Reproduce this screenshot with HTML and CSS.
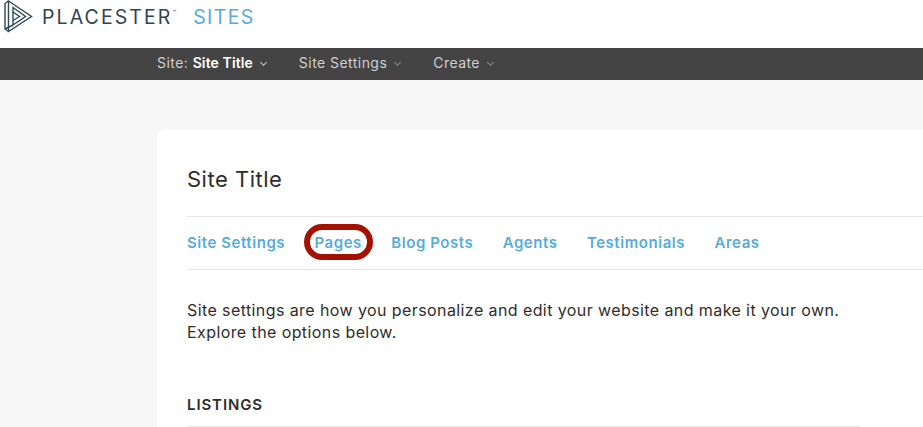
FILE: index.html

```html
<!DOCTYPE html>
<html lang="en">
<head>
  <meta charset="UTF-8" />
  <title>Placester Sites</title>
  <link rel="stylesheet" href="styles.css">
</head>
<body>
  <header class="topbar">
    <svg class="logo-mark" viewBox="0 0 30 33" width="30" height="33" fill="none" stroke="#2f4a57" stroke-width="1.4">
      <path d="M4.5 1 L27.5 16.5 L4.5 31.5 L4.5 1 Z" />
      <path d="M4.5 1 L1 3.5 L1 29 L4.5 31.5" />
      <path d="M9 7.5 L21.5 16.5 L9 25 Z" />
      <path d="M9 12 L15.5 16.5 L9 20.5" />
      <path d="M1 29 L9 25" />
    </svg>
    <span class="logo-name">PLACESTER<sup class="logo-tm">&trade;</sup></span>
    <span class="logo-sites">SITES</span>
  </header>

  <nav class="menu">
    <div class="menu-item">Site: <b>Site Title</b><span class="caret caret-light"></span></div>
    <div class="menu-item">Site Settings<span class="caret"></span></div>
    <div class="menu-item">Create<span class="caret"></span></div>
  </nav>

  <main class="page">
    <section class="card">
      <h1 class="card-title">Site Title</h1>
      <div class="tabs">
        <a class="tab">Site Settings</a>
        <a class="tab tab-circled">Pages</a>
        <a class="tab">Blog Posts</a>
        <a class="tab">Agents</a>
        <a class="tab">Testimonials</a>
        <a class="tab">Areas</a>
      </div>
      <p class="intro">Site settings are how you personalize and edit your website and make it your own.<br>Explore the options below.</p>
      <h2 class="section-title">LISTINGS</h2>
      <div class="section-rule"></div>
    </section>
  </main>
</body>
</html>
```

FILE: styles.css

```css
* {
  box-sizing: border-box;
}
body {
  display: flex;
  flex-direction: column;
  height: 100vh;
  margin: 0;
  background: #f7f7f7;
  color: #2f2d2c;
  font-family: "Inter", "Open Sans", sans-serif;
  overflow: hidden;
}
.topbar {
  display: flex;
  flex: none;
  align-items: center;
  height: 48px;
  padding: 0 0 15px 4px;
  background: #fff;
}
.logo-mark {
  margin-right: 8px;
}
.logo-name {
  font-size: 19.5px;
  font-weight: 400;
  letter-spacing: 2.1px;
  color: #32444e;
}
.logo-tm {
  font-size: 6px;
  letter-spacing: 0;
  vertical-align: 9px;
  line-height: 0;
}
.logo-sites {
  margin-left: 17px;
  font-size: 19.5px;
  font-weight: 400;
  letter-spacing: 1.4px;
  color: #58acd8;
}
.menu {
  display: flex;
  flex: none;
  align-items: center;
  gap: 31px;
  height: 32px;
  padding: 0 0 4px 157px;
  background: #444;
  color: #cfcfcf;
  font-size: 14px;
  letter-spacing: 0.45px;
}
.menu-item b {
  color: #fff;
  font-weight: 600;
  letter-spacing: 0.1px;
}
.caret {
  display: inline-block;
  width: 5px;
  height: 5px;
  margin: 0 2px 3px 8px;
  border-right: 1px solid #8a8a8a;
  border-bottom: 1px solid #8a8a8a;
  transform: rotate(45deg);
}
.caret-light {
  border-color: #c4c4c4;
}
.page {
  display: flex;
  flex: 1;
  padding: 50px 0 0 157px;
}
.card {
  flex: 1;
  padding: 32px 0 0 30px;
  background: #fff;
  border-radius: 8px 0 0 0;
}
.card-title {
  margin: 0 0 19px;
  font-size: 22px;
  line-height: 35px;
  font-weight: 400;
  letter-spacing: 0.5px;
}
.tabs {
  display: flex;
  align-items: center;
  gap: 29.4px;
  height: 54px;
  padding-bottom: 2px;
  border-top: 1px solid #e6e6e6;
  border-bottom: 1px solid #e6e6e6;
}
.tab {
  position: relative;
  color: #58acd8;
  font-size: 15px;
  font-weight: 600;
  letter-spacing: 0.55px;
}
.tab-circled::after {
  content: "";
  position: absolute;
  top: -9px;
  right: -11px;
  bottom: -8px;
  left: -11px;
  border: 6px solid #a31200;
  border-radius: 18px;
}
.intro {
  margin: 29px 0 0;
  font-size: 16px;
  line-height: 22px;
  letter-spacing: 0.41px;
  color: #2f2d2c;
}
.section-title {
  margin: 52px 0 0;
  font-size: 15px;
  line-height: 20px;
  font-weight: 600;
  letter-spacing: 0.9px;
}
.section-rule {
  width: 673px;
  height: 1px;
  margin-top: 11px;
  background: #e6e6e6;
}
```
